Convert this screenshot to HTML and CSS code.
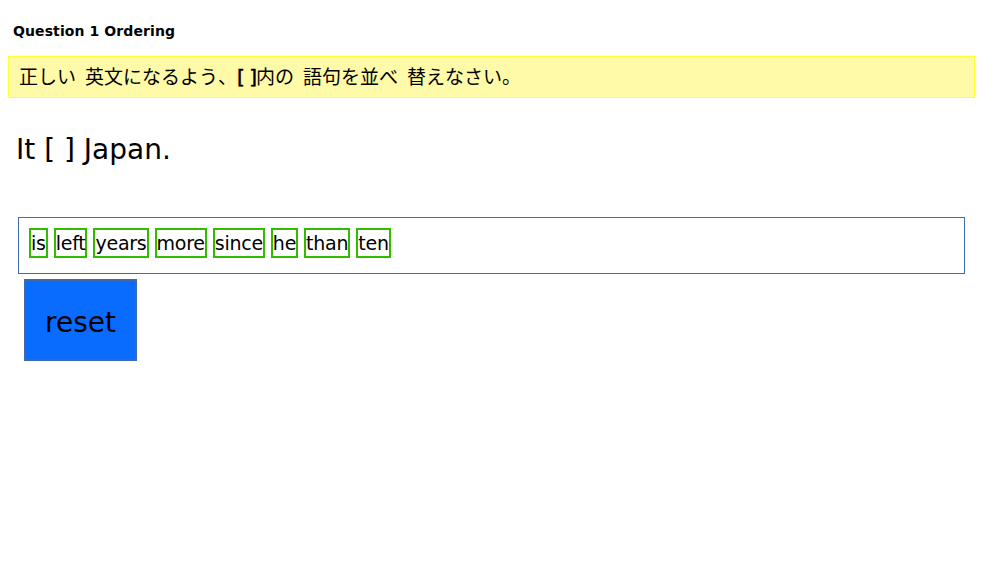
FILE: index.html
```html
<!DOCTYPE html>
<html lang="ja">
<head>
<meta charset="utf-8">
<title>Question 1 Ordering</title>
<link rel="stylesheet" href="styles.css">
</head>
<body>
<h3 class="title">Question 1 Ordering</h3>
<div class="instr">正しい 英文になるよう、<span class="br">[ ]</span>内の 語句を並べ 替えなさい。</div>
<p class="sentence">It [ ] Japan.</p>
<div class="answer">
  <span class="word">is</span>
  <span class="word">left</span>
  <span class="word">years</span>
  <span class="word">more</span>
  <span class="word">since</span>
  <span class="word">he</span>
  <span class="word">than</span>
  <span class="word">ten</span>
</div>
<button class="reset" type="button">reset</button>
</body>
</html>
```
FILE: styles.css
```css
body {
  margin: 8px;
  font-family: "DejaVu Sans", Verdana, sans-serif;
  color: #000;
  background: #fff;
}
.title {
  margin: 13px 0 0 5px;
  font-size: 14px;
  line-height: 20px;
  font-weight: bold;
  letter-spacing: 0.1px;
}
.instr {
  margin-top: 15px;
  box-sizing: border-box;
  height: 42px;
  border: 1px solid #ffff33;
  background: #fffaa8;
  padding-left: 10px;
  font-family: "DejaVu Sans", "Noto Sans CJK JP", sans-serif;
  font-size: 19px;
  line-height: 40px;
  word-spacing: 3px;
}
.instr .br {
  font-size: 20px;
  letter-spacing: -1px;
  word-spacing: 0;
  -webkit-text-stroke: 0.5px #000;
}
.sentence {
  margin: 35px 0 0 8px;
  font-size: 28px;
  line-height: 34px;
}
.answer {
  margin: 50px 10px 0 10px;
  box-sizing: border-box;
  height: 57px;
  border: 1px solid #3f6db5;
  padding: 10px 0 0 10px;
  display: flex;
  gap: 6px;
  align-items: flex-start;
}
.word {
  border: 2px solid #33bb00;
  font-size: 19px;
  line-height: 26px;
  letter-spacing: -0.25px;
  padding: 0;
}
.reset {
  display: block;
  margin: 5px 0 0 16px;
  width: 113px;
  height: 82px;
  background: #0a6cff;
  border: 2px solid #3d6aab;
  font-family: "DejaVu Sans", Verdana, sans-serif;
  font-size: 28px;
  line-height: 34px;
  padding: 6px 0 0 0;
  color: #000;
}
```
